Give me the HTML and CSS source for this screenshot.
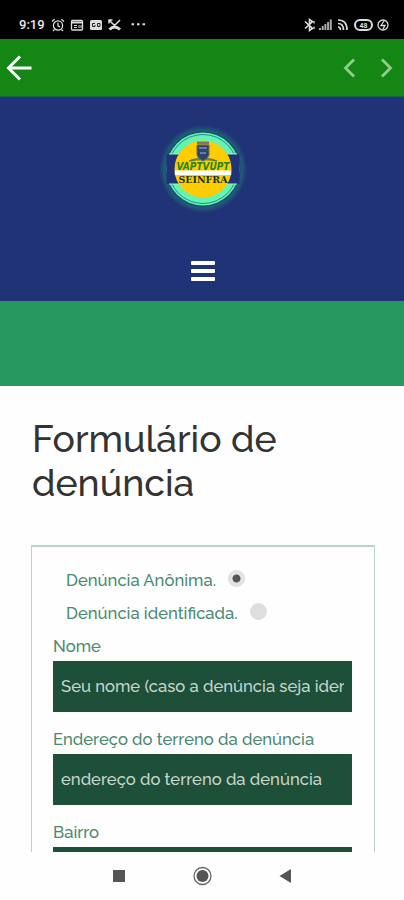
FILE: index.html
```html
<!DOCTYPE html>
<html lang="pt-BR">
<head>
    <meta charset="UTF-8">
    <meta name="viewport" content="width=device-width, initial-scale=1.0">
    <title>Formulário de denúncia</title>
    <link rel="stylesheet" href="styles.css">
</head>
<body>

    <!-- Barra de status -->
    <div class="status-bar">
        <span class="clock">9:19</span>
        <svg class="status-left" width="96" height="14" viewBox="0 0 96 14" fill="none" stroke="#ddd" stroke-width="1.3">
            <circle cx="7" cy="7.5" r="4.6"/>
            <path d="M7 4.8v3l2 1M1 3.5l2.6-2.3M13 3.5l-2.6-2.3M3.5 11.5L2 13M10.5 11.5L12 13"/>
            <rect x="20.5" y="2.5" width="11" height="9.5" rx="1"/>
            <path d="M21 4.5h10" stroke-width="2"/>
            <path d="M23 7.5h3M23 9.5h3M28 7v3M30 7v3" stroke-width="1"/>
            <rect x="39" y="2" width="12" height="10" rx="1.5" fill="#ddd" stroke="none"/>
            <path d="M44 5.5h-2.5v3H44V7M46.5 5.5H49v3h-2.5z" stroke="#222" stroke-width="1"/>
            <path d="M58 2l5.5 5.500L69 2M58 5.500V2h3.500" stroke-width="1.5"/>
            <path d="M58.5 11.500q5-5 10.500 0" stroke-width="3"/>
            <path d="M80.5 6.200H83M86 6.200h2.500M91.500 6.200H94" stroke-width="2"/>
        </svg>
        <svg class="status-right" width="86" height="14" viewBox="0 0 86 14" fill="none" stroke="#ddd" stroke-width="1.3">
            <path d="M1 3.5l7.500 7-3 2V1.500l3 2-7.500 7" stroke-width="1.6"/>
            <path d="M10 3v2.500M10 8.500V11"/>
            <path d="M16 12v-2M18.700 12V8M21.400 12V6M24.100 12V4M26.800 12V1.500" stroke="#aaa" stroke-width="2"/>
            <path d="M34 2q9 0 9 10M34 5.500q5.500 0 5.500 6.500M34 9q2.500 0 2.500 3" stroke-width="1.7"/>
            <rect x="51" y="2" width="17" height="10" rx="5" stroke-width="2"/>
            <text x="59.5" y="9.8" class="battery-text">48</text>
            <circle cx="79" cy="7" r="5"/>
            <path d="M80 3l-3 4.500h4L79 11"/>
        </svg>
    </div>

    <!-- Navegação do aplicativo -->
    <div class="app-bar">
        <svg width="26" height="26" viewBox="0 0 26 26" fill="none" stroke="#fff" stroke-width="3">
            <path d="M25.5 13H3M14 1.5L2.5 13 14 24.5"/>
        </svg>
        <svg class="arrows" width="50" height="20" viewBox="0 0 50 20" fill="none" stroke="#8fce8f" stroke-width="2.8">
            <path d="M11 1.5L2.5 10l8.500 8.500M39 1.500l8.500 8.500-8.500 8.500"/>
        </svg>
    </div>

    <header class="site-header">
        <svg class="logo" width="92" height="92" viewBox="0 0 92 92">
            <defs>
                <radialGradient id="glow">
                    <stop offset="0.82" stop-color="#1f6f78"/>
                    <stop offset="1" stop-color="#203376"/>
                </radialGradient>
            </defs>
            <circle cx="46" cy="46" r="44" fill="url(#glow)"/>
            <circle cx="46" cy="46" r="38" fill="#1c4c73"/>
            <circle cx="46" cy="46" r="36.5" fill="#62f3b5"/>
            <circle cx="46" cy="46" r="34.5" fill="none" stroke="#288f84" stroke-width="1"/>
            <path d="M9.5 31h73v30h-73z" fill="#203376"/>
            <path d="M12 31h10M70 31h10M12 61h10M70 61h10" stroke="#9ff0cf"/>
            <circle cx="46" cy="46" r="28.5" fill="#fc0"/>
            <path d="M17.8 47.5h56.400v4.500H17.800z" fill="#fff"/>
            <path d="M34 37q9-3 10 0M58 37q-9-3-10 0M32 38q14-3 28 0" fill="none" stroke="#627b35" stroke-width="1.3"/>
            <path d="M40 18.5h12v3H40z" fill="#777"/>
            <path d="M40 22h12v10q-1 4-6 6-5-2-6-6z" fill="#29466f" stroke="#7c6750"/>
            <path d="M42 25h8M43 30h6" stroke="#8190a4" stroke-width="1.5"/>
            <text x="46" y="47" class="logo-top" textLength="53" lengthAdjust="spacingAndGlyphs">VAPTVUPT</text>
            <text x="46" y="59.5" class="logo-name" textLength="49" lengthAdjust="spacingAndGlyphs">SEINFRA</text>
        </svg>
        <div class="menu-button">
            <span></span>
            <span></span>
            <span></span>
        </div>
    </header>

    <div class="banner"></div>

    <!-- Formulário -->
    <main class="content">
        <h1>Formulário de<br>denúncia</h1>
        <form class="report-form">
            <label class="option"><span>Denúncia Anônima.</span><input type="radio" name="tipo" checked></label>
            <label class="option"><span>Denúncia identificada.</span><input type="radio" name="tipo"></label>

            <label class="field-label" for="nome">Nome</label>
            <input class="field" type="text" id="nome" placeholder="Seu nome (caso a denúncia seja ider">

            <label class="field-label" for="endereco">Endereço do terreno da denúncia</label>
            <input class="field" type="text" id="endereco" placeholder="endereço do terreno da denúncia">

            <label class="field-label" for="bairro">Bairro</label>
            <input class="field" type="text" id="bairro">
        </form>
    </main>

    <!-- Botões do sistema -->
    <nav class="system-nav">
        <svg width="404" height="48" viewBox="0 0 404 48" fill="#555">
            <rect x="113" y="18" width="12" height="12"/>
            <circle cx="202.5" cy="24" r="8.5" fill="none" stroke="#666" stroke-width="1.3"/>
            <circle cx="202.5" cy="24" r="6"/>
            <path d="M279.5 24l11.500-7v14z"/>
        </svg>
    </nav>

</body>
</html>
```
FILE: styles.css
```css
* { box-sizing: border-box; }
body {
    margin: 0;
    height: 900px;
    display: flex;
    flex-direction: column;
    overflow: hidden;
    background: #fefefe;
    font-family: Raleway, Lato, "Open Sans", sans-serif;
}
svg { display: block; flex-shrink: 0; }

.status-bar { height: 39px; flex-shrink: 0; padding: 10px 14px 0 19px; display: flex; align-items: center; background: #000; color: #e8e8e8; }
.clock { width: 26px; font: 500 13px/14px Roboto, sans-serif; }
.status-left { margin-left: 6px; }
.status-right { margin-left: auto; }
.battery-text { font: bold 7px Roboto, sans-serif; fill: #ddd; stroke: none; text-anchor: middle; }

.app-bar { height: 58px; flex-shrink: 0; padding: 0 11px 0 6px; display: flex; align-items: center; justify-content: space-between; background: #138613; border-bottom: 1px solid #17634a; }

.site-header { height: 204px; flex-shrink: 0; padding: 26px 0 0 1px; display: flex; flex-direction: column; align-items: center; background: #203376; }
.logo-top { font: italic bold 11px "DejaVu Sans", sans-serif; fill: #25851c; text-anchor: middle; }
.logo-name { font: bold 10px "DejaVu Serif", serif; fill: #173527; text-anchor: middle; }
.menu-button { margin-top: 46px; display: grid; gap: 4px; }
.menu-button span { width: 24px; height: 4px; background: #fff; border-radius: 1px; }

.banner { height: 85px; flex-shrink: 0; background: #269860; }

.content { flex: 1; min-height: 0; overflow: hidden; padding: 32px 29px 0 31px; }
h1 { margin: 0; padding-left: 1px; color: #333; font-size: 37.4px; font-weight: 500; line-height: 43.5px; }

.report-form { margin-top: 40px; height: 340px; padding: 23px 21px 0; border: 1px solid #b8d5cb; border-top-width: 2px; }
.option { display: flex; align-items: flex-start; padding-left: 13px; height: 33px; }
.option span, .field-label { color: #4b8a70; font-size: 16.65px; font-weight: 500; line-height: 20px; }
.option input { appearance: none; width: 17px; height: 17px; margin: 0 0 0 12px; border: 1px solid #ddd; border-radius: 50%; background: #dedede; }
.option input:checked { background: radial-gradient(circle, #555 3.5px, #e3e3e3 4.5px); }
.field-label { display: block; height: 25px; }
.field { display: block; width: 299px; height: 51px; margin: 0 0 17px; padding: 0 8px 2px; border: 0; border-radius: 0; background: #1d4f39; font: 500 16.65px Raleway, Lato, "Open Sans", sans-serif; }
.field::placeholder { color: #c7d5cc; opacity: 1; }

.system-nav { height: 48px; flex-shrink: 0; background: #fefefe; }
```
